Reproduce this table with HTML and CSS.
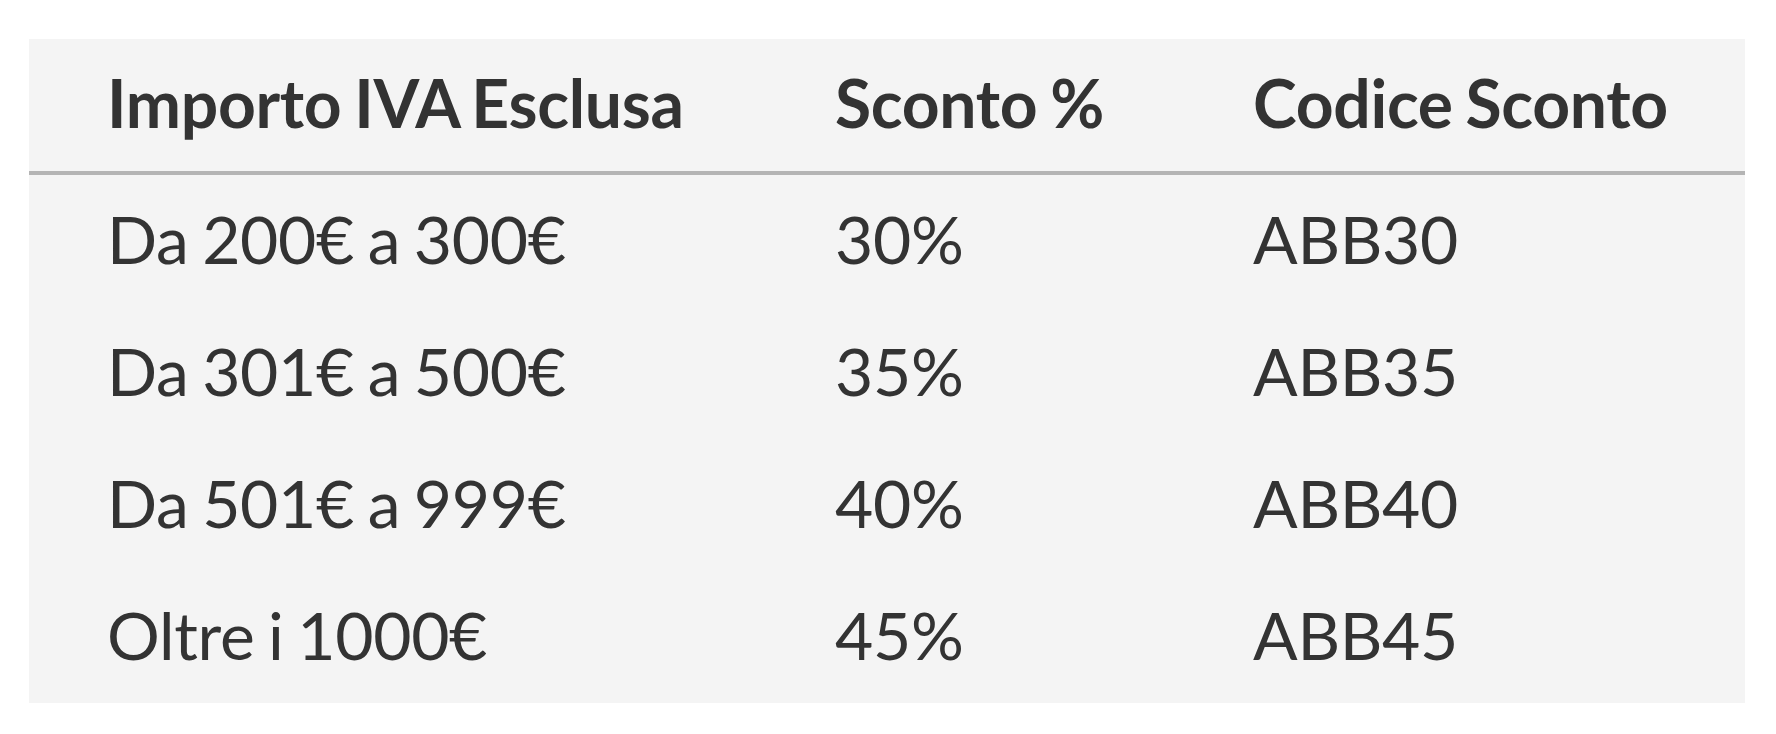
FILE: index.html
```html
<!DOCTYPE html>
<html lang="it">
<head>
<meta charset="utf-8">
<title>Sconti</title>
<link rel="stylesheet" href="styles.css">
</head>
<body>
<table class="discount-table">
  <colgroup>
    <col class="col-amount">
    <col class="col-percent">
    <col class="col-code">
  </colgroup>
  <thead>
    <tr>
      <th>Importo IVA Esclusa</th>
      <th>Sconto %</th>
      <th>Codice Sconto</th>
    </tr>
  </thead>
  <tbody>
    <tr><td>Da 200€ a 300€</td><td>30%</td><td>ABB30</td></tr>
    <tr><td>Da 301€ a 500€</td><td>35%</td><td>ABB35</td></tr>
    <tr><td>Da 501€ a 999€</td><td>40%</td><td>ABB40</td></tr>
    <tr><td>Oltre i 1000€</td><td>45%</td><td>ABB45</td></tr>
  </tbody>
</table>
</body>
</html>
```

FILE: styles.css
```css
html, body {
  margin: 0;
  padding: 0;
  background: #ffffff;
}
body {
  padding: 39px 31px 0 29px;
  font-family: Lato, "Liberation Sans", sans-serif;
  color: #333333;
}
.discount-table {
  width: 1716px;
  table-layout: fixed;
  border-collapse: collapse;
  border-spacing: 0;
  background: #f4f4f4;
}
.col-amount { width: 728px; }
.col-percent { width: 418px; }
.col-code { width: 570px; }
.discount-table th,
.discount-table td {
  text-align: left;
  font-size: 66px;
  line-height: 80px;
  letter-spacing: -0.3px;
  word-spacing: -3px;
  padding: 24px 0 28px 78px;
  white-space: nowrap;
}
.discount-table th {
  font-weight: 700;
  border-bottom: 4px solid #b4b4b4;
}
.discount-table td {
  font-weight: 400;
}
```
